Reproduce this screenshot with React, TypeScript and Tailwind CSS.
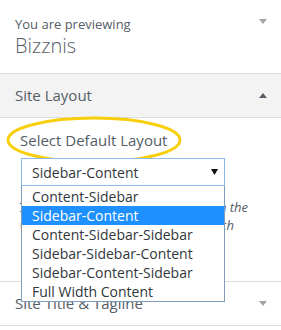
import React from "react";

const layouts = [
  "Content-Sidebar",
  "Sidebar-Content",
  "Content-Sidebar-Sidebar",
  "Sidebar-Sidebar-Content",
  "Sidebar-Content-Sidebar",
  "Full Width Content",
];

const Caret = ({ up = false, color }: { up?: boolean; color: string }) => (
  <svg width="8" height="5" viewBox="0 0 8 5">
    <path d={up ? "M0 5 L4 0 L8 5 Z" : "M0 0 L8 0 L4 5 Z"} fill={color} />
  </svg>
);

export default function App() {
  const selected = "Sidebar-Content";

  return (
    <div className="w-[281px] h-[330px] overflow-hidden bg-white font-['Open_Sans',sans-serif] text-[#555d66]">
      {/* preview header */}
      <div className="h-[74px] border-b border-[#dddddd] pl-[15px] pr-[14px] pt-[16px] flex justify-between">
        <div className="flex flex-col">
          <span className="text-[13px] leading-[16px]">You are previewing</span>
          <span className="text-[20px] leading-[24px] font-light mt-[2px]">Bizznis</span>
        </div>
        <div className="pt-[3px]">
          <Caret color="#a0a5aa" />
        </div>
      </div>

      {/* open section */}
      <div className="h-[44px] bg-[#f3f3f3] border-b border-[#dddddd] pl-[15px] pr-[14px] flex items-center justify-between">
        <span className="text-[15px]">Site Layout</span>
        <Caret up color="#555d66" />
      </div>

      <div className="relative h-[163px] px-[20px] pt-[12px]">
        <svg className="absolute left-0 top-[-3px] pointer-events-none" width="190" height="52" viewBox="0 0 190 52">
          <ellipse cx="94" cy="25" rx="86" ry="22" fill="none" stroke="#f8cf0a" strokeWidth="3" />
        </svg>
        <div className="relative text-[15px] leading-[20px]">Select Default Layout</div>

        <div className="relative ml-px mt-[8px] w-[204px] z-10">
          <div className="h-[28px] border border-[#8bbaea] bg-white flex items-center justify-between pl-[10px] pr-[6px]">
            <span className="text-[14px] text-[#32373c]">{selected}</span>
            <svg width="7" height="6" viewBox="0 0 7 6">
              <path d="M0 0 L7 0 L3.5 6 Z" fill="#111111" />
            </svg>
          </div>
          <ul className="absolute left-0 top-full w-[204px] bg-white border-x border-b border-[#7f9db9] pt-px">
            {layouts.map((l) => (
              <li
                key={l}
                className={
                  l === selected
                    ? "h-[19px] leading-[19px] pl-[10px] text-[14px] bg-[#1e90ff] text-white"
                    : "h-[19px] leading-[19px] pl-[10px] text-[14px] text-[#32373c]"
                }
              >
                {l}
              </li>
            ))}
          </ul>
        </div>

        {/* description, mostly hidden under the open list */}
        <div className="mt-[12px] text-[13px] italic leading-[18px] whitespace-nowrap">
          <div className="w-[228px] overflow-hidden flex justify-end">
            <span className="shrink-0">Choose the layout used by default on the</span>
          </div>
          <div className="w-[214px] overflow-hidden flex justify-end">
            <span className="shrink-0">whole site. It can be changed on each</span>
          </div>
          <div className="w-[180px] overflow-hidden flex justify-end">
            <span className="shrink-0">individual post or page.</span>
          </div>
        </div>
      </div>

      {/* collapsed section */}
      <div className="h-[45px] border-y border-[#dddddd] pl-[15px] pr-[14px] flex items-center justify-between">
        <span className="text-[15px]">Site Title &amp; Tagline</span>
        <Caret color="#a0a5aa" />
      </div>
    </div>
  );
}
